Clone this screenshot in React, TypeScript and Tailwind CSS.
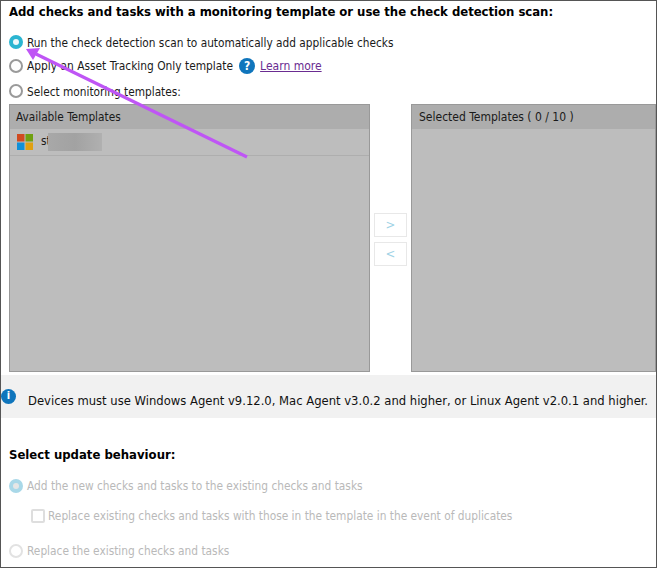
const font = { fontFamily: '"DejaVu Sans Condensed", Tahoma, "DejaVu Sans", sans-serif' }

function Radio({ checked, disabled }: { checked?: boolean; disabled?: boolean }) {
  if (checked) {
    return (
      <span
        className={`flex h-[14px] w-[14px] shrink-0 items-center justify-center rounded-full ${
          disabled ? 'bg-[#a9d8e8]' : 'bg-[#2bb5d1]'
        }`}
      >
        <span className={`h-[6px] w-[6px] rounded-full ${disabled ? 'bg-[#e6e6e6]' : 'bg-[#eef8fa]'}`} />
      </span>
    )
  }
  return (
    <span
      className={`h-[14px] w-[14px] shrink-0 rounded-full border-2 bg-white ${
        disabled ? 'border-[#e2e2e2]' : 'border-[#9a9a9a]'
      }`}
    />
  )
}

function Panel({ title, className, titleClass, children }: { title: string; className: string; titleClass: string; children?: React.ReactNode }) {
  return (
    <div className={`flex h-[268px] flex-col border border-[#999] bg-[#bdbdbd] ${className}`}>
      <div className={`flex h-[24px] shrink-0 items-center bg-[#adadad] text-[#1a1a1a] ${titleClass}`}>{title}</div>
      {children}
    </div>
  )
}

function MoveButton({ label }: { label: string }) {
  return (
    <button className="flex h-[24px] w-[33px] items-center justify-center border border-[#e8e8e8] bg-white text-[13px] text-[#9fd3e6]">
      {label}
    </button>
  )
}

export default function App() {
  return (
    <div
      className="relative h-[568px] w-[657px] overflow-hidden border border-[#555] bg-white text-[11.75px] text-[#1a1a1a]"
      style={font}
    >
      <div className="pl-2 pt-[2px]">
        <h2 className="h-[18px] text-[13px] leading-[18px] font-bold tracking-[-0.03px] text-black">
          Add checks and tasks with a monitoring template or use the check detection scan:
        </h2>
        <div className="mt-[11px] flex h-[20px] items-center gap-[4px]">
          <Radio checked />
          <span className="pt-[4px]">Run the check detection scan to automatically add applicable checks</span>
        </div>
        <div className="mt-[4px] flex h-[20px] items-center gap-[4px]">
          <Radio />
          <span className="pt-[2px] text-[11.85px]">Apply an Asset Tracking Only template</span>
          <span className="ml-[2px] flex h-[16px] w-[16px] items-center justify-center rounded-full bg-[#0f75bc] text-[12px] font-bold text-white">
            ?
          </span>
          <a className="ml-[1px] text-[12px] text-[#6a2c91] underline">Learn more</a>
        </div>
        <div className="mt-[5px] flex h-[20px] items-center gap-[4px]">
          <Radio />
          <span className="pt-[4px]">Select monitoring templates:</span>
        </div>
        <div className="mt-[3px] flex">
          <Panel title="Available Templates" className="w-[361px]" titleClass="pl-[6px] pt-[2px]">
            <div className="flex h-[27px] items-center gap-[8px] border-b border-[#aeaeae] pl-[7px]">
              <svg width="16" height="16" viewBox="0 0 16 16">
                <rect x="0" y="0" width="7.5" height="7.5" fill="#d04a20" />
                <rect x="8.5" y="0" width="7.5" height="7.5" fill="#6fa010" />
                <rect x="0" y="8.5" width="7.5" height="7.5" fill="#1090d8" />
                <rect x="8.5" y="8.5" width="7.5" height="7.5" fill="#e0a010" />
              </svg>
              <span className="flex items-center">
                st
                <span className="-ml-[3px] h-[18px] w-[54px] bg-gradient-to-r from-[#a8a8a8] via-[#a2a2a2] to-[#b0b0b0]" />
              </span>
            </div>
          </Panel>
          <div className="flex w-[41px] flex-col items-center gap-[5px] pt-[109px]">
            <MoveButton label=">" />
            <MoveButton label="<" />
          </div>
          <Panel title="Selected Templates ( 0 / 10 )" className="flex-1 text-[12px]" titleClass="pl-[7px]" />
        </div>
      </div>

      <div className="mt-[3px] flex h-[43px] items-center bg-[#f1f1f1] pl-[27px] text-[12.9px] text-[#111]">
        <span className="absolute left-0 flex h-[15px] w-[15px] items-center justify-center rounded-full bg-[#0f75bc] text-[11px] font-bold text-white">
          i
        </span>
        <span className="mt-[9px]">
          Devices must use Windows Agent v9.12.0, Mac Agent v3.0.2 and higher, or Linux Agent v2.0.1 and higher.
        </span>
      </div>

      <div className="pl-2 pt-[28px] text-[11.8px] text-[#b9b9b9]">
        <h2 className="h-[18px] text-[13px] leading-[18px] font-bold text-black">Select update behaviour:</h2>
        <div className="mt-[12px] flex h-[20px] items-center gap-[4px]">
          <Radio checked disabled />
          <span className="pt-[2px]">Add the new checks and tasks to the existing checks and tasks</span>
        </div>
        <div className="mt-[10px] flex h-[20px] items-center gap-[3px] pl-[22px]">
          <span className="h-[14px] w-[14px] rounded-[2px] border-2 border-[#dedede] bg-white" />
          <span className="pt-[2px]">Replace existing checks and tasks with those in the template in the event of duplicates</span>
        </div>
        <div className="mt-[15px] flex h-[20px] items-center gap-[4px]">
          <Radio disabled />
          <span className="pt-[2px]">Replace the existing checks and tasks</span>
        </div>
      </div>

      <svg className="pointer-events-none absolute top-[-1px] left-[-1px]" width="657" height="568" viewBox="0 0 657 568">
        <line x1="247" y1="157" x2="36" y2="54" stroke="#bf55f5" strokeWidth="3.2" />
        <polygon points="26,49 40,48 33,60" fill="#bf55f5" />
      </svg>
    </div>
  )
}
